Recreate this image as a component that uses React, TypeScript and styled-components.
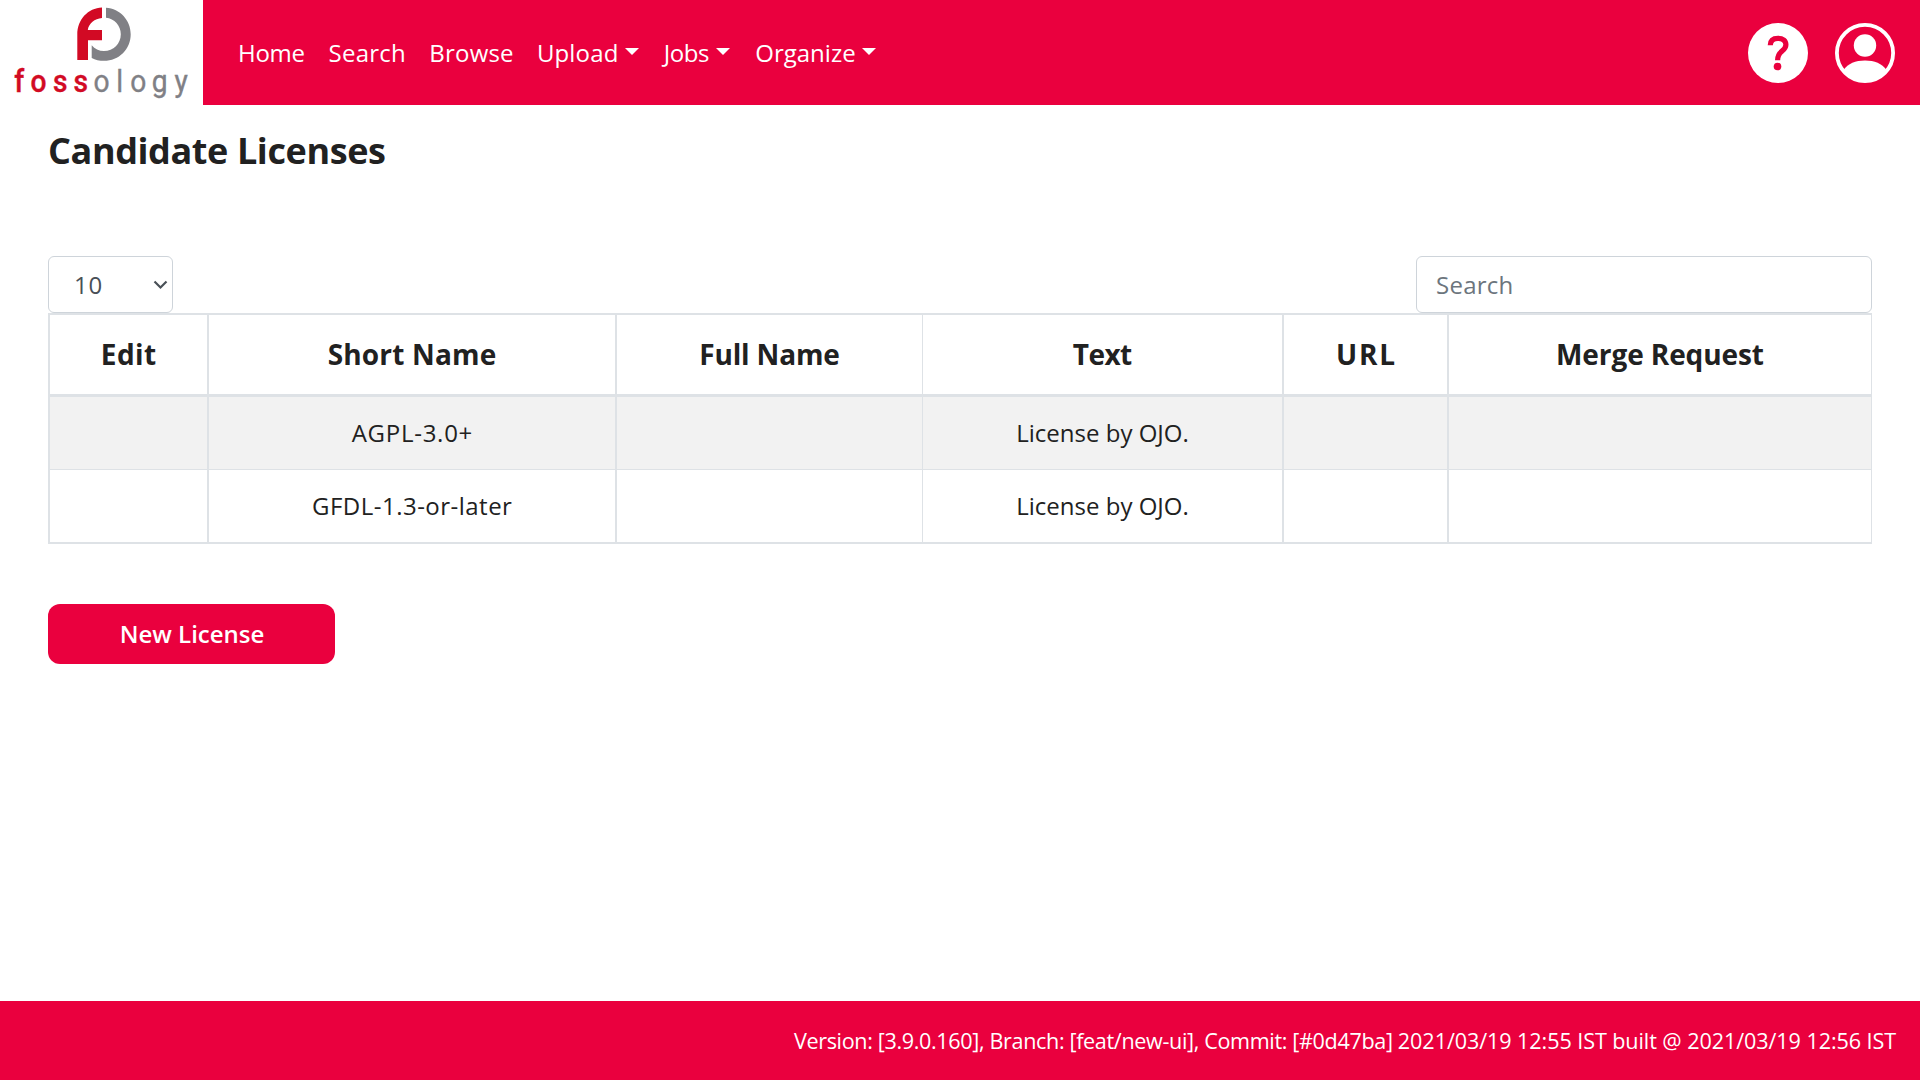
import React from 'react';
import styled, { createGlobalStyle, css } from 'styled-components';

const red = '#ea003e';
const line = '#dee2e6';

const GlobalStyle = createGlobalStyle`
  *, *::before, *::after { box-sizing: border-box; }
  body {
    margin: 0;
    background: #fff;
    color: #212121;
    font-family: 'Open Sans', 'Noto Sans', sans-serif;
    font-size: 24px;
  }
`;

const Page = styled.div`
  display: flex;
  flex-direction: column;
  height: 100vh;
  min-height: 1080px;
  overflow: hidden;
`;

const Header = styled.header`
  display: flex;
  align-items: center;
  height: 105px;
  padding-right: 25px;
  background: ${red};
`;

const LogoLink = styled.a`
  display: block;
  width: 203px;
  height: 105px;
  background: #fff;
`;

const Nav = styled.nav`
  display: flex;
  flex: 1;
  padding-left: 35px;
`;

const NavLink = styled.a<{ $width: number; $spacing?: number }>`
  display: flex;
  align-items: center;
  flex: none;
  width: ${(p) => p.$width}px;
  line-height: 36px;
  color: #fff;
  letter-spacing: ${(p) => p.$spacing ?? 0}px;
  white-space: nowrap;
`;

const Caret = styled.span`
  margin-left: 6.6px;
  margin-top: -2px;
  border-top: 7.2px solid #fff;
  border-left: 7.2px solid transparent;
  border-right: 7.2px solid transparent;
`;

const HeaderIcons = styled.div`
  display: flex;
  gap: 27px;
  padding-top: 1px;

  svg { display: block; }
`;

const Main = styled.main`
  flex: 1;
  padding: 24px 48px 0;
`;

const Title = styled.h1`
  margin: 0 0 83px;
  font-size: 36px;
  font-weight: 700;
  line-height: 44px;
  letter-spacing: -0.4px;
`;

const Controls = styled.div`
  display: flex;
  justify-content: space-between;
  height: 57px;
`;

const field = css`
  height: 57px;
  border: 1px solid #ced4da;
  border-radius: 6px;
  background: #fff;
  color: #495057;
  font: inherit;
  outline: none;
`;

const SelectWrap = styled.div`
  position: relative;
  width: 125px;

  svg {
    position: absolute;
    right: 5px;
    top: 23px;
    pointer-events: none;
  }
`;

const PageSize = styled.select`
  ${field}
  width: 100%;
  padding: 0 0 0 25px;
  letter-spacing: 0.8px;
  appearance: none;
`;

const SearchInput = styled.input`
  ${field}
  width: 456px;
  padding: 0 18px 0 19px;
  letter-spacing: 0.25px;

  &::placeholder { color: #6c757d; opacity: 1; }
`;

const Table = styled.table`
  width: 1824px;
  table-layout: fixed;
  border-collapse: separate;
  border-spacing: 0;
`;

const Column = styled.col<{ $width: number }>`
  width: ${(p) => p.$width}px;
`;

const cell = css<{ $edge?: number }>`
  padding: 0 0 2px;
  text-align: center;
  vertical-align: middle;
  white-space: nowrap;
  border: 0 solid ${line};
  border-right-width: ${(p) => p.$edge ?? 2}px;

  &:first-child { border-left-width: 2px; }
`;

const HeadCell = styled.th<{ $edge?: number }>`
  ${cell}
  height: 84px;
  border-top-width: 2px;
  border-bottom-width: 3px;
  font-size: 28px;
  font-weight: 700;
`;

const Cell = styled.td<{ $edge?: number }>`
  ${cell}
  height: 73px;
  border-bottom-width: 1px;
`;

const Row = styled.tr`
  &:nth-child(odd) { background: #f2f2f2; }
  &:last-child ${Cell} { height: 74px; border-bottom-width: 2px; }
`;

const Tracked = styled.span<{ $spacing: number }>`
  letter-spacing: ${(p) => p.$spacing}px;
  margin-right: ${(p) => -p.$spacing}px;
`;

const NewButton = styled.button`
  display: block;
  width: 287px;
  height: 60px;
  margin-top: 60px;
  padding: 0 0 2px 1px;
  border: 0;
  border-radius: 12px;
  background: ${red};
  color: #fff;
  font: inherit;
  font-weight: 600;
`;

const Footer = styled.footer`
  display: flex;
  align-items: center;
  justify-content: flex-end;
  height: 79px;
  padding-right: 24px;
  background: ${red};
  color: #fff;
  font-size: 21.6px;
  white-space: nowrap;
`;

const BuildInfo = styled.span<{ $spacing: number }>`
  padding-bottom: 1px;
  letter-spacing: ${(p) => p.$spacing}px;
  white-space: pre;
`;

const WordMark = styled.text`
  font-family: Roboto, sans-serif;
  font-size: 32px;
`;

const Logo = () => (
  <svg width="203" height="105" viewBox="0 0 203 105" role="img" aria-label="fossology">
    <path
      fill="#d20a24"
      d="M102 7.6V18C94.600 18.600 88.800 23.500 87.800 29.900H102V40.200H88V60H77.300V34.500C77.300 19.600 88 8.200 102 7.600Z"
    />
    <path
      fill="#808085"
      d="M106 7.700C120 8.700 130.700 20 130.700 34.200C130.700 49.200 119 60.800 104 60.800C99.500 60.800 95.300 59.800 91.700 57.900V45.200C94.700 48.800 99 51 104 51C113.400 51 120.800 43.600 120.800 34.200C120.800 25.600 114.400 18.600 106 17.700Z"
    />
    <g transform="scale(0.88 1)">
      <WordMark x="16.200 34.700 60.200 83.500" y="92" fill="#d20a24" fontWeight="500" stroke="#d20a24" strokeWidth="0.400">foss</WordMark>
      <WordMark x="106.300 132 148 172.400 198.300" y="92" fill="#808085" fontWeight="400" stroke="#808085" strokeWidth="0.400">ology</WordMark>
    </g>
  </svg>
);

const HelpIcon = () => (
  <svg width="60" height="60" viewBox="0 0 60 60">
    <circle cx="30" cy="30" r="30" fill="#fff" />
    <path
      d="M22.300 22.300C22.300 17.800 25 15.300 30 15.300C34.900 15.300 37.900 17.900 37.900 21.700C37.900 24.800 36.300 26.400 33.700 28.400C30.800 30.700 29.600 32.400 29.600 37.200"
      fill="none"
      stroke={red}
      strokeWidth="5.200"
    />
    <circle cx="29.500" cy="43.500" r="3.800" fill={red} />
  </svg>
);

const UserIcon = () => (
  <svg width="60" height="60" viewBox="0 0 60 60">
    <circle cx="30" cy="30" r="28.100" fill="none" stroke="#fff" strokeWidth="3.800" />
    <circle cx="30" cy="22.500" r="11.200" fill="#fff" />
    <path d="M8.500 47C13 40.500 20.500 37.400 30 37.400S47 40.500 51.500 47C46 55 39 59 30 59S14 55 8.500 47Z" fill="#fff" />
  </svg>
);

const navItems = [
  { label: 'Home', width: 90.6, spacing: -0.28 },
  { label: 'Search', width: 100.7, spacing: 0.24 },
  { label: 'Browse', width: 107.6, spacing: 0.2 },
  { label: 'Upload', width: 126.8, spacing: 0.15, menu: true },
  { label: 'Jobs', width: 91.6, spacing: -0.4, menu: true },
  { label: 'Organize', width: 124, spacing: 0, menu: true },
];

const columns = [
  { label: 'Edit', width: 161, spacing: 0.4 },
  { label: 'Short Name', width: 408, spacing: 0.18 },
  { label: 'Full Name', width: 306, spacing: -0.15, edge: 1 },
  { label: 'Text', width: 361, spacing: -0.6 },
  { label: 'URL', width: 165, spacing: 1.8 },
  { label: 'Merge Request', width: 423, spacing: -0.1, edge: 1 },
];

const licenses = [
  { name: 'AGPL-3.0+', spacing: 0.74, text: 'License by OJO.' },
  { name: 'GFDL-1.3-or-later', spacing: 0.48, text: 'License by OJO.' },
];

export default function App() {
  return (
    <Page>
      <GlobalStyle />
      <Header>
        <LogoLink><Logo /></LogoLink>
        <Nav>
          {navItems.map((item) => (
            <NavLink key={item.label} $width={item.width} $spacing={item.spacing}>
              {item.label}
              {item.menu && <Caret />}
            </NavLink>
          ))}
        </Nav>
        <HeaderIcons>
          <HelpIcon />
          <UserIcon />
        </HeaderIcons>
      </Header>
      <Main>
        <Title>Candidate Licenses</Title>
        <Controls>
          <SelectWrap>
            <PageSize defaultValue="10">
              <option value="10">10</option>
            </PageSize>
            <svg width="15" height="12" viewBox="0 0 15 12">
              <path d="M1.500 2.500L7.500 8.500L13.500 2.500" fill="none" stroke="#495057" strokeWidth="2.200" />
            </svg>
          </SelectWrap>
          <SearchInput placeholder="Search" />
        </Controls>
        <Table>
          <colgroup>
            {columns.map((c) => <Column key={c.label} $width={c.width} />)}
          </colgroup>
          <thead>
            <tr>
              {columns.map((c) => (
                <HeadCell key={c.label} $edge={c.edge}>
                  <Tracked $spacing={c.spacing}>{c.label}</Tracked>
                </HeadCell>
              ))}
            </tr>
          </thead>
          <tbody>
            {licenses.map((l) => (
              <Row key={l.name}>
                <Cell />
                <Cell><Tracked $spacing={l.spacing}>{l.name}</Tracked></Cell>
                <Cell $edge={1} />
                <Cell>{l.text}</Cell>
                <Cell />
                <Cell $edge={1} />
              </Row>
            ))}
          </tbody>
        </Table>
        <NewButton>New License</NewButton>
      </Main>
      <Footer>
        <BuildInfo $spacing={-0.36}>{'Version: [3.9.0.160], Branch: [feat/new-ui], Commit: [#0d47ba] '}</BuildInfo>
        <BuildInfo $spacing={-0.09}>2021/03/19 12:55 IST built @ 2021/03/19 12:56 IST</BuildInfo>
      </Footer>
    </Page>
  );
}
